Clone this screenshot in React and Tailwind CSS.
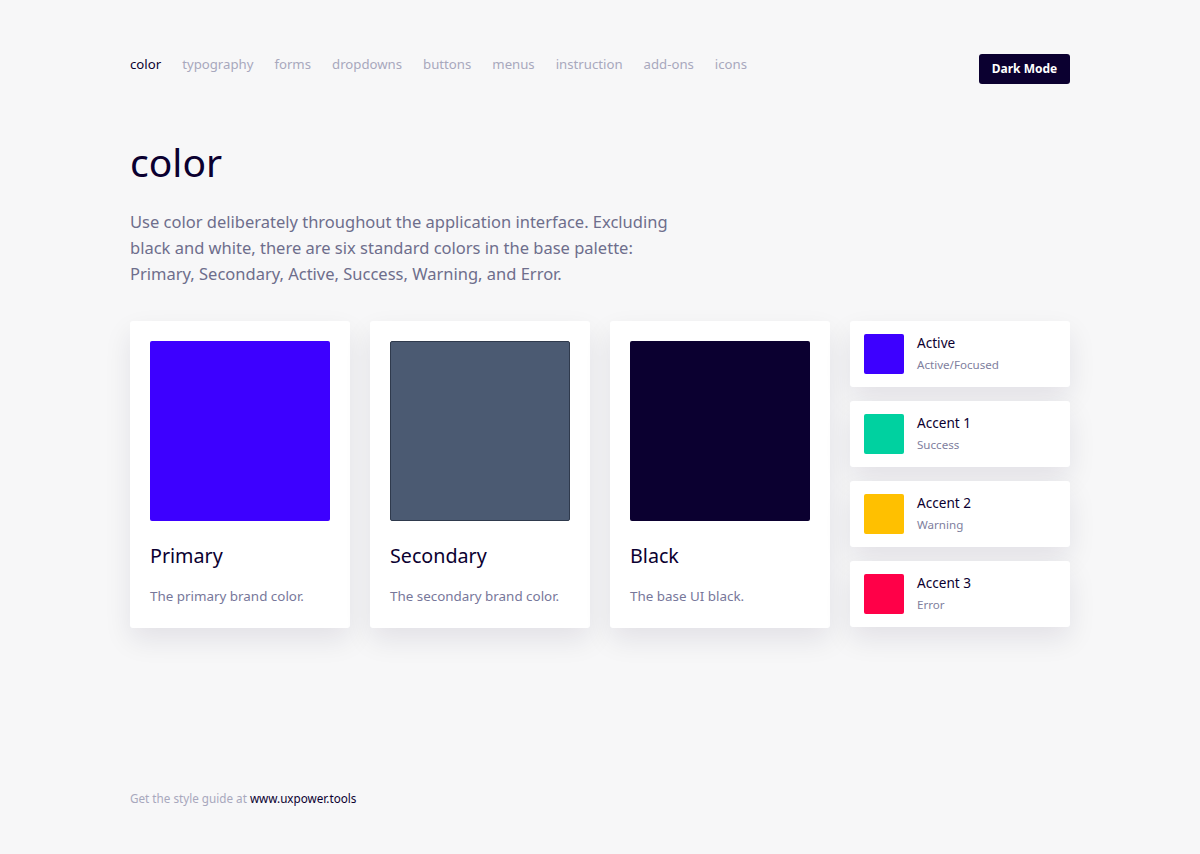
const nav = ['color', 'typography', 'forms', 'dropdowns', 'buttons', 'menus', 'instruction', 'add-ons', 'icons'];

const big = [
  { name: 'Primary', desc: 'The primary brand color.', swatch: 'bg-[#3d00ff]' },
  { name: 'Secondary', desc: 'The secondary brand color.', swatch: 'bg-[#4b5a72] border border-[#2f3a4d]' },
  { name: 'Black', desc: 'The base UI black.', swatch: 'bg-[#0b0030]' },
];

const small = [
  { name: 'Active', desc: 'Active/Focused', swatch: 'bg-[#3d00ff]' },
  { name: 'Accent 1', desc: 'Success', swatch: 'bg-[#00d1a0]' },
  { name: 'Accent 2', desc: 'Warning', swatch: 'bg-[#ffc000]' },
  { name: 'Accent 3', desc: 'Error', swatch: 'bg-[#ff0048]' },
];

const shadow = 'shadow-[0_12px_28px_rgba(20,10,60,0.09)]';

export default function App() {
  return (
    <div className="min-h-[854px] bg-[#f7f7f8] font-['Noto_Sans',sans-serif] text-[#0b0030]">
      <div className="mx-auto w-[940px] pt-[54px] pb-[40px]">
        <header className="flex items-start justify-between h-[29px]">
          <nav className="flex gap-[21px] text-[13.2px] leading-[20px]">
            {nav.map((n, i) => (
              <a key={n} className={i === 0 ? 'text-[#0b0030]' : 'text-[#a8a8bd]'}>{n}</a>
            ))}
          </nav>
          <button className="h-[30px] w-[91px] rounded-[3px] bg-[#0b0030] text-white text-[12px] font-bold">
            Dark Mode
          </button>
        </header>

        <h1 className="mt-[51px] text-[39px] leading-[56px]">color</h1>
        <p className="mt-[19px] w-[560px] text-[16.5px] leading-[26px] text-[#6e6e8c]">
          Use color deliberately throughout the application interface. Excluding black and white, there are six standard colors in the base palette: Primary, Secondary, Active, Success, Warning, and Error.
        </p>

        <div className="mt-[34px] flex gap-[20px]">
          {big.map((c) => (
            <div key={c.name} className={`w-[220px] h-[307px] bg-white rounded-[3px] p-[20px] ${shadow}`}>
              <div className={`h-[180px] w-[180px] rounded-[2px] ${c.swatch}`} />
              <div className="mt-[21px] text-[19.7px] leading-[28px]">{c.name}</div>
              <div className="mt-[16px] text-[13.4px] text-[#77779a]">{c.desc}</div>
            </div>
          ))}
          <div className="flex w-[220px] flex-col gap-[14px]">
            {small.map((c) => (
              <div key={c.name} className={`flex h-[66px] items-center gap-[13px] bg-white rounded-[3px] px-[14px] ${shadow}`}>
                <div className={`h-[40px] w-[40px] rounded-[2px] ${c.swatch}`} />
                <div className="-mt-[2px]">
                  <div className="text-[13.6px] leading-[20px]">{c.name}</div>
                  <div className="mt-[4px] text-[11.6px] leading-[16px] text-[#80809e]">{c.desc}</div>
                </div>
              </div>
            ))}
          </div>
        </div>

        <footer className="mt-[162px] text-[11.7px] text-[#a8a8bd]">
          Get the style guide at <span className="text-[#0b0030]">www.uxpower.tools</span>
        </footer>
      </div>
    </div>
  );
}
